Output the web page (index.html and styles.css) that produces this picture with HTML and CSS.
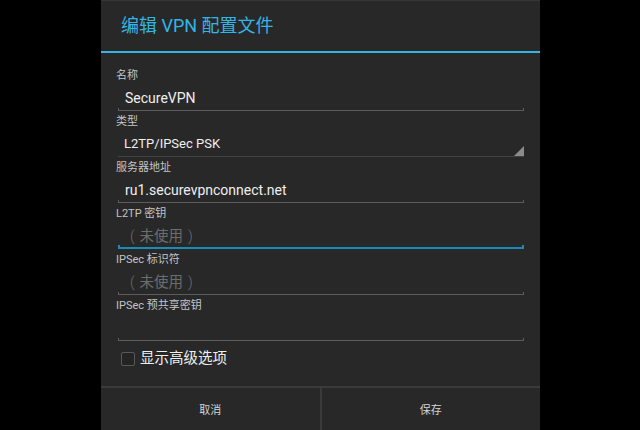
FILE: index.html
```html
<!DOCTYPE html>
<html lang="zh">
<head>
<meta charset="utf-8">
<title>编辑 VPN 配置文件</title>
<link rel="stylesheet" href="styles.css">
</head>
<body>
<div class="dialog">
  <div class="title">编辑 VPN 配置文件</div>
  <div class="title-rule"></div>
  <div class="body">
    <div class="field">
      <div class="label">名称</div>
      <div class="input">
        <div class="value">SecureVPN</div>
        <div class="line"></div>
      </div>
    </div>
    <div class="field">
      <div class="label">类型</div>
      <div class="spinner">
        <div class="spin-value">L2TP/IPSec PSK</div>
        <svg class="spin-arrow" width="10" height="10" viewBox="0 0 10 10"><polygon points="10,0 10,10 0,10" fill="#8c8c8c"/></svg>
      </div>
    </div>
    <div class="field">
      <div class="label">服务器地址</div>
      <div class="input">
        <div class="value">ru1.securevpnconnect.net</div>
        <div class="line"></div>
      </div>
    </div>
    <div class="field">
      <div class="label">L2TP 密钥</div>
      <div class="input">
        <div class="value placeholder"><span class="fw">(</span>未使用<span class="fw">)</span></div>
        <div class="line focus"></div>
      </div>
    </div>
    <div class="field">
      <div class="label">IPSec 标识符</div>
      <div class="input">
        <div class="value placeholder"><span class="fw">(</span>未使用<span class="fw">)</span></div>
        <div class="line"></div>
      </div>
    </div>
    <div class="field">
      <div class="label">IPSec 预共享密钥</div>
      <div class="input">
        <div class="value"></div>
        <div class="line"></div>
      </div>
    </div>
    <div class="check-row">
      <span class="checkbox"></span>
      <span class="check-label">显示高级选项</span>
    </div>
  </div>
  <div class="footer">
    <div class="btn">取消</div>
    <div class="btn-divider"></div>
    <div class="btn">保存</div>
  </div>
</div>
</body>
</html>
```
FILE: styles.css
```css
* { box-sizing: border-box; }
html, body {
  margin: 0;
  padding: 0;
  background: #000;
  height: 430px;
  overflow: hidden;
}
body {
  font-family: "Roboto", "Noto Sans CJK SC", sans-serif;
}
.dialog {
  margin-left: 101px;
  width: 439px;
  height: 430px;
  background: #282828;
  display: flex;
  flex-direction: column;
}
.title {
  height: 51px;
  border-top: 1px solid #363636;
  padding-left: 20px;
  font-size: 18px;
  line-height: 49px;
  color: #33b5e5;
}
.title-rule {
  height: 2px;
  background: #33b5e5;
}
.body {
  flex: 1;
  padding: 16px 16px 0 15px;
}
.field {
  height: 46px;
}
.label {
  font-size: 11px;
  line-height: 14px;
  height: 14px;
  color: #c4c4c4;
}
.input {
  margin-left: 2px;
  height: 28px;
  display: flex;
  flex-direction: column;
}
.value {
  height: 25px;
  padding: 6px 0 0 7px;
  font-size: 14px;
  line-height: 19px;
  color: #efefef;
  white-space: nowrap;
}
.value.placeholder {
  color: #6c6c6c;
  font-size: 14.5px;
}
.fw {
  display: inline-block;
  width: 14.5px;
  text-align: center;
  font-weight: 300;
}
.line {
  height: 3px;
  border: 1px solid #5c5c5c;
  border-top: 0;
}
.line.focus {
  height: 4px;
  margin-top: -1px;
  border-width: 0 2px 2px 2px;
  border-color: #1c8ab6;
}
.spinner {
  margin-left: 2px;
  height: 28px;
  display: flex;
  align-items: flex-end;
  border-bottom: 1px solid #424242;
}
.spin-value {
  flex: 1;
  height: 27px;
  padding: 5px 0 0 6px;
  font-size: 13px;
  line-height: 19px;
  color: #efefef;
}
.spin-arrow {
  display: block;
  flex: none;
}
.check-row {
  margin-top: 0;
  height: 28px;
  display: flex;
  align-items: center;
  padding-left: 5px;
}
.checkbox {
  width: 14px;
  height: 14px;
  border: 1px solid #585858;
  border-radius: 2px;
  background: #242424;
  margin-right: 5px;
}
.check-label {
  font-size: 14.5px;
  line-height: 20px;
  color: #efefef;
}
.footer {
  height: 44px;
  border-top: 2px solid #3a3a3a;
  display: flex;
}
.btn {
  flex: 1;
  display: flex;
  align-items: center;
  justify-content: center;
  font-size: 11px;
  color: #d4d4d4;
}
.btn-divider {
  width: 2px;
  background: #3a3a3a;
}
```
